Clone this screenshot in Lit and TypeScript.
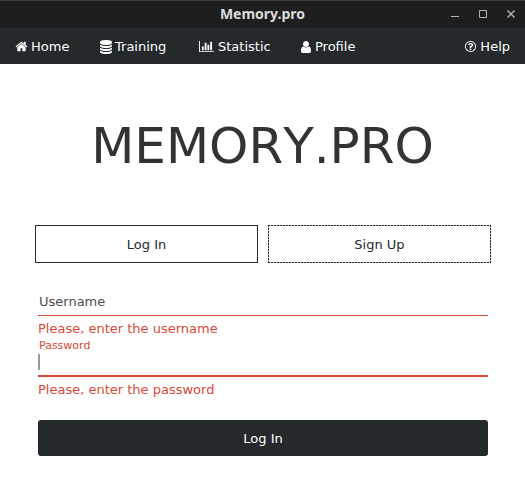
import { LitElement, html, css, svg } from "lit";
import { customElement } from "lit/decorators.js";

const ICONS = {
  home: { w: 1792, d: "M1472 992v480q0 26-19 45t-45 19h-384v-384h-256v384h-384q-26 0-45-19t-19-45v-480q0-1 .5-3t.5-3l575-474 575 474q1 2 1 6zm223-69l-62 74q-8 9-21 11h-3q-13 0-21-7l-692-577-692 577q-12 8-24 7-13-2-21-11l-62-74q-8-10-7-23.5t11-21.5l719-599q32-26 76-26t76 26l244 204v-195q0-14 9-23t23-9h192q14 0 23 9t9 23v408l219 182q10 8 11 21.5t-7 23.5z" },
  database: { w: 1792, d: "M896 768q237 0 443-43t325-127v170q0 69-103 128t-280 93.5-385 34.5-385-34.5-280-93.5-103-128v-170q119 84 325 127t443 43zm0 768q237 0 443-43t325-127v170q0 69-103 128t-280 93.5-385 34.5-385-34.5-280-93.5-103-128v-170q119 84 325 127t443 43zm0-384q237 0 443-43t325-127v170q0 69-103 128t-280 93.5-385 34.5-385-34.5-280-93.5-103-128v-170q119 84 325 127t443 43zm0-1152q208 0 385 34.5t280 93.5 103 128v128q0 69-103 128t-280 93.5-385 34.5-385-34.5-280-93.5-103-128v-128q0-69 103-128t280-93.5 385-34.5z" },
  chart: { w: 2048, d: "M640 896v512h-256v-512h256zm384-512v1024h-256v-1024h256zm1024 1152v128h-2048v-1536h128v1408h1920zm-640-896v768h-256v-768h256zm384-384v1152h-256v-1152h256z" },
  user: { w: 1792, d: "M1536 1399q0 109-62.5 187t-150.5 78h-854q-88 0-150.5-78t-62.5-187q0-85 8.5-160.5t31.5-152 58.5-131 94-89 134.5-34.5q131 128 313 128t313-128q76 0 134.5 34.5t94 89 58.5 131 31.5 152 8.5 160.5zm-256-887q0 159-112.5 271.5t-271.5 112.5-271.5-112.5-112.5-271.5 112.5-271.5 271.5-112.5 271.5 112.5 112.5 271.5z" },
  help: { w: 1792, d: "M1008 1200v160q0 14-9 23t-23 9h-160q-14 0-23-9t-9-23v-160q0-14 9-23t23-9h160q14 0 23 9t9 23zm256-496q0 50-15 90t-45.5 69-52 44-59.5 36q-32 18-46.5 28t-26 24-11.5 29v32q0 14-9 23t-23 9h-160q-14 0-23-9t-9-23v-68q0-35 10.5-64.5t24-47.5 39-35.5 41-25.5 44.5-21q53-25 75-43t22-49q0-42-43.5-71.5t-95.5-29.5q-56 0-95 27-29 20-80 83-9 12-25 12-11 0-19-6l-108-82q-10-7-12-20t5-23q122-192 349-192 129 0 238.5 89.5t109.5 214.5zm-368-448q-130 0-248.5 51t-204 136.5-136.5 204-51 248.5 51 248.5 136.5 204 204 136.5 248.5 51 248.5-51 204-136.5 136.5-204 51-248.5-51-248.5-136.5-204-204-136.5-248.5-51zm768 640q0 209-103 385.5t-279.5 279.5-385.5 103-385.5-103-279.5-279.5-103-385.5 103-385.5 279.5-279.5 385.5-103 385.5 103 279.5 279.5 103 385.5z" },
};

function icon(name: keyof typeof ICONS) {
  const { w, d } = ICONS[name];
  return html`<svg class="icon ${name}" viewBox="0 0 ${w} 1792" aria-hidden="true">${svg`<path d=${d}></path>`}</svg>`;
}

@customElement("app-root")
export class AppRoot extends LitElement {
  static styles = css`
    :host {
      display: flex;
      flex-direction: column;
      height: 484px;
      box-sizing: border-box;
      background: #fff;
      color: #24292c;
      font: 13px/16px "DejaVu Sans", sans-serif;
      overflow: hidden;
    }
    * { box-sizing: border-box; }
    .titlebar {
      display: grid;
      grid-template-columns: 1fr auto 1fr;
      align-items: center;
      height: 28px;
      flex: none;
      border-top: 1px solid #3b3d3f;
      background: #1d1e20;
      color: #dcdcda;
    }
    .title {
      grid-column: 2;
      font: bold 14px/20px "Noto Sans", sans-serif;
      padding-bottom: 2px;
    }
    .controls {
      justify-self: end;
      display: flex;
      padding: 0 8px 1px 0;
      gap: 16px;
    }
    .control { width: 12px; height: 12px; fill: none; stroke: #b4b4b2; }
    .nav {
      display: flex;
      align-items: center;
      height: 36px;
      flex: none;
      padding: 1px 15px 0 15px;
      background: #24292c;
      color: #fff;
    }
    .item { display: flex; align-items: center; white-space: pre; }
    .home-item { width: 84px; }
    .training-item { width: 100px; }
    .stat-item { width: 100px; }
    .help-item { margin-left: auto; }
    .icon { height: 13px; width: 13px; fill: #fff; margin-right: 3px; flex: none; }
    .icon.database { height: 14px; width: 14px; margin-right: 2px; }
    .icon.chart { width: 15px; margin-right: 4px; }
    .icon.user { height: 14px; width: 14px; margin-right: 2px; }
    .heading {
      margin: 53px 0 0;
      height: 58px;
      font-size: 50px;
      line-height: 58px;
      font-weight: normal;
      font-kerning: none;
      text-align: center;
      color: #333;
    }
    .tabs { display: flex; gap: 10px; margin: 50px 34px 0 35px; }
    .tab {
      flex: 1;
      height: 38px;
      line-height: 37px;
      text-align: center;
      border: 1px solid #24292c;
      background: #fff;
    }
    .tab.idle {
      border: 0;
      padding: 1px;
      background:
        repeating-linear-gradient(90deg, #24292c 0 2px, #bbb 2px 3px) top / 100% 1px no-repeat,
        repeating-linear-gradient(90deg, #24292c 0 2px, #bbb 2px 3px) bottom / 100% 1px no-repeat,
        repeating-linear-gradient(#24292c 0 2px, #bbb 2px 3px) left / 1px 100% no-repeat,
        repeating-linear-gradient(#24292c 0 2px, #bbb 2px 3px) right / 1px 100% no-repeat,
        #fff;
    }
    .form { margin: 25px 37px 0 38px; display: flex; flex-direction: column; }
    .field { height: 28px; padding: 6px 1px 0; color: #4d4d4d; border-bottom: 1px solid #d64937; }
    .error { color: #d64937; height: 17px; line-height: 16px; margin-top: 5px; }
    .label { color: #d64937; font-size: 11px; line-height: 14px; height: 15px; padding: 1px 0 0 1px; }
    .entry { height: 24px; padding-top: 1px; border-bottom: 2px solid #d64937; }
    .caret { width: 2px; height: 16px; background: #999; }
    .submit {
      height: 36px;
      margin-top: 21px;
      border-radius: 3px;
      background: #24292c;
      color: #fff;
      line-height: 37px;
      text-align: center;
    }
  `;

  render() {
    return html`
      <header class="titlebar">
        <span class="title">Memory.pro</span>
        <div class="controls">
          <svg class="control" viewBox="0 0 12 12"><path d="M2 8.5h8"></path></svg>
          <svg class="control" viewBox="0 0 12 12"><path d="M2.5 2.5h7v7h-7z"></path></svg>
          <svg class="control" viewBox="0 0 12 12"><path d="M2.5 2.5l7 7M9.5 2.5l-7 7" stroke-width="1.4"></path></svg>
        </div>
      </header>
      <nav class="nav">
        <div class="item home-item">${icon("home")}<span>Home</span></div>
        <div class="item training-item">${icon("database")}<span>Training</span></div>
        <div class="item stat-item">${icon("chart")}<span>Statistic</span></div>
        <div class="item">${icon("user")}<span>Profile</span></div>
        <div class="item help-item">${icon("help")}<span>Help</span></div>
      </nav>
      <h1 class="heading">MEMORY.PRO</h1>
      <div class="tabs">
        <div class="tab">Log In</div>
        <div class="tab idle">Sign Up</div>
      </div>
      <div class="form">
        <div class="field">Username</div>
        <div class="error">Please, enter the username</div>
        <div class="label">Password</div>
        <div class="entry"><div class="caret"></div></div>
        <div class="error">Please, enter the password</div>
        <div class="submit">Log In</div>
      </div>
    `;
  }
}
